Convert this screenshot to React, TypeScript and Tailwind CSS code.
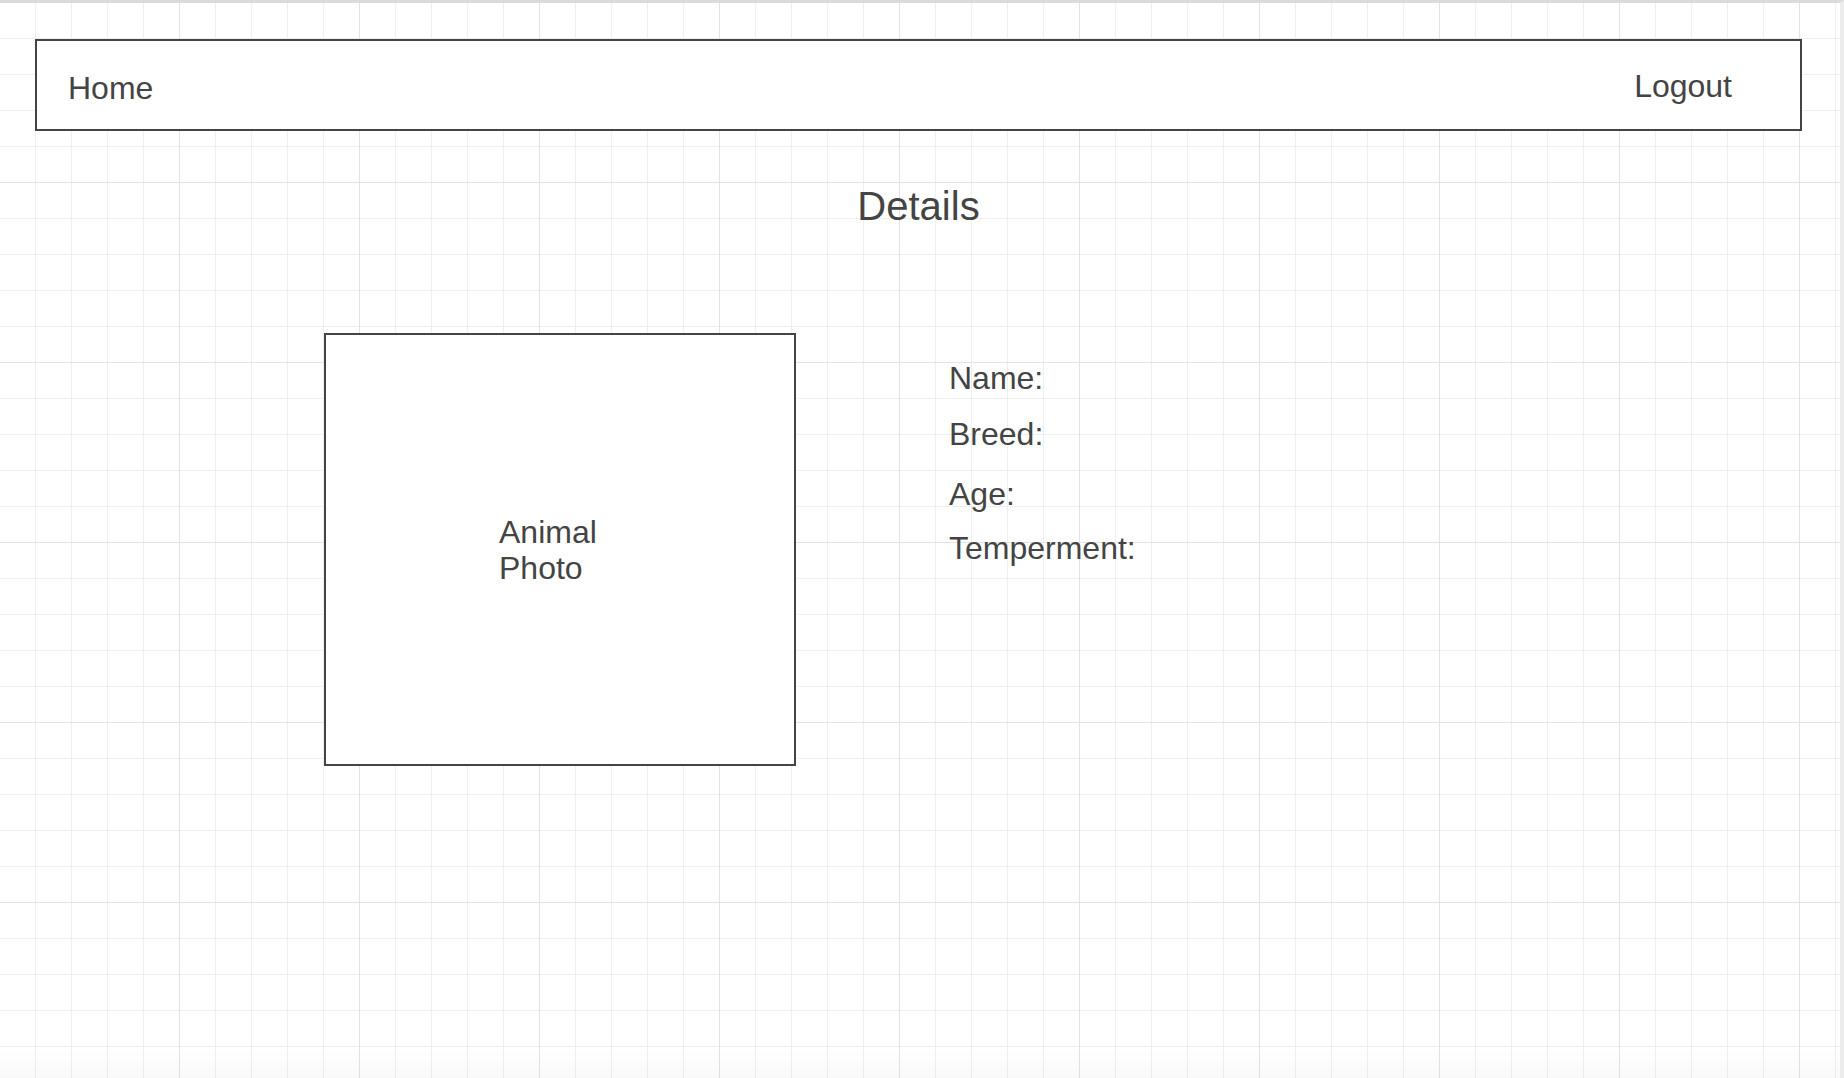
const LABELS = [
  { text: 'Name:', gap: 'mt-0' },
  { text: 'Breed:', gap: 'mt-[19px]' },
  { text: 'Age:', gap: 'mt-[23px]' },
  { text: 'Temperment:', gap: 'mt-[17px]' },
];

export default function App() {
  return (
    <div
      className="h-[1078px] w-full overflow-hidden border-t-[3px] border-r-4 border-t-[#dadada] border-r-[#ececec] bg-white font-['Liberation_Sans',Arial,sans-serif] text-[#444]
        bg-[image:linear-gradient(to_bottom,transparent_1043px,rgba(0,0,0,0.025)_1075px),linear-gradient(to_right,#e3e3e3_1px,transparent_1px),linear-gradient(to_bottom,#e3e3e3_1px,transparent_1px),linear-gradient(to_right,#efefef_1px,transparent_1px),linear-gradient(to_bottom,#efefef_1px,transparent_1px)]
        bg-[size:100%_100%,180px_180px,180px_180px,36px_36px,36px_36px]
        bg-[position:0_0,179px_0,0_179px,35px_0,0_35px]"
    >
      {/* top bar */}
      <nav className="ml-[35px] mt-[36px] flex h-[92px] w-[1767px] items-start justify-between border-2 border-[#444] bg-white pl-[31px] pr-[68px] text-[32px] leading-[37px]">
        <a className="pt-[29px]">Home</a>
        <a className="pt-[27px]">Logout</a>
      </nav>

      <h1 className="ml-[35px] mt-[52px] w-[1767px] text-center text-[40px] leading-[46px]">Details</h1>

      <div className="ml-[324px] mt-[104px] flex items-start">
        <div className="flex h-[433px] w-[472px] items-center border-2 border-[#444] bg-white pl-[173px] text-[32px] leading-[36px]">
          <p>
            Animal
            <br />
            Photo
          </p>
        </div>

        <div className="ml-[153px] flex flex-col pt-[27px] text-[32px] leading-[37px]">
          {LABELS.map((l) => (
            <span key={l.text} className={l.gap}>
              {l.text}
            </span>
          ))}
        </div>
      </div>
    </div>
  );
}
